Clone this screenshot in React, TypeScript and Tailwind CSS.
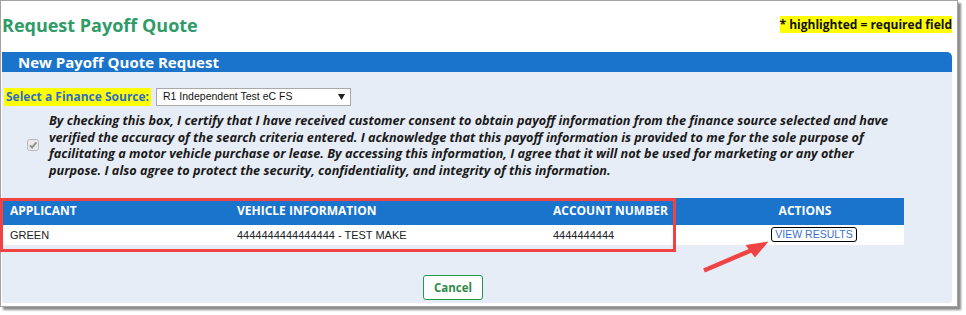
export default function App() {
  const os = { fontFamily: '"Open Sans", "Liberation Sans", Arial, sans-serif' };
  const ar = { fontFamily: '"Liberation Sans", Arial, sans-serif' };
  return (
    <div className="w-[966px] h-[315px] bg-white" style={os}>
      <div className="relative w-[958px] h-[307px] border border-[#a3a3a3] bg-white shadow-[3px_3px_2px_rgba(0,0,0,0.45)] pl-[1px] pr-[5px]">
        <div className="flex justify-between h-[51px]">
          <div className="mt-[11px] text-[18px] leading-[27px] font-bold text-[#2f9b67]">Request Payoff Quote</div>
          <div className="mt-[15px] h-[17px] leading-[17px] bg-[#ffff00] text-[12px] font-bold text-[#111]">* highlighted = required field</div>
        </div>
        <div className="h-[20px] bg-[#1b74cc] rounded-tr-[5px] pl-[16px] text-[15px] leading-[20px] font-bold text-white">New Payoff Quote Request</div>
        <div className="h-[231px] bg-[#e7edf6] rounded-b-[3px] pt-[16px]">
          <div className="flex items-center gap-[5px] pl-[2px]">
            <div className="h-[18px] leading-[18px] px-[2px] bg-[#ffff00] text-[12px] font-bold text-[#2d6ccb]">Select a Finance Source:</div>
            <div className="w-[195px] h-[18px] border border-[#a9a9a9] bg-white flex items-center justify-between pl-[6px] pr-[5px] text-[10.5px] text-[#111]" style={ar}>
              <span>R1 Independent Test eC FS</span>
              <svg width="7" height="6" viewBox="0 0 7 6"><polygon points="0,0 7,0 3.5,6" fill="#222" /></svg>
            </div>
          </div>
          <div className="flex items-center mt-[6px]">
            <div className="ml-[25px] w-[12px] h-[12px]">
              <svg width="12" height="12" viewBox="0 0 12 12">
                <rect x="0.5" y="0.5" width="11" height="11" rx="2" fill="#e9e9e9" stroke="#b9b9b9" />
                <path d="M3 6.3 L5.1 8.6 L9.3 3.4" fill="none" stroke="#8c8c8c" strokeWidth="1.8" />
              </svg>
            </div>
            <p className="ml-[10px] w-[860px] text-[12.7px] leading-[16.7px] font-bold italic text-[#1a1a1a]">
              By checking this box, I certify that I have received customer consent to obtain payoff information from the finance source selected and have<br />
              verified the accuracy of the search criteria entered. I acknowledge that this payoff information is provided to me for the sole purpose of<br />
              facilitating a motor vehicle purchase or lease. By accessing this information, I agree that it will not be used for marketing or any other<br />
              purpose. I also agree to protect the security, confidentiality, and integrity of this information.
            </p>
          </div>
          <div className="w-[902px] mt-[19px]">
            <div className="grid grid-cols-[227px_316px_161px_1fr] h-[27px] bg-[#1b74cc] text-white text-[12px] font-bold items-center">
              <div className="pl-[8px]">APPLICANT</div>
              <div className="pl-[8px]">VEHICLE INFORMATION</div>
              <div className="pl-[8px]">ACCOUNT NUMBER</div>
              <div className="text-center">ACTIONS</div>
            </div>
            <div className="grid grid-cols-[227px_316px_161px_1fr] h-[20px] bg-white text-[11px] text-[#222] items-center" style={ar}>
              <div className="pl-[8px]">GREEN</div>
              <div className="pl-[8px]">4444444444444444 - TEST MAKE</div>
              <div className="pl-[8px]">4444444444</div>
              <div className="pl-[65px] flex">
                <span className="h-[15px] w-[86px] border border-black rounded-[3px] text-[10.5px] leading-[13px] text-center text-[#3b6fcf]">VIEW RESULTS</span>
              </div>
            </div>
            <div className="flex justify-center mt-[30px]">
              <button className="w-[60px] h-[25px] bg-white border border-[#1d9a50] rounded-[3px] text-[11.5px] font-bold text-[#2f8a48]" style={os}>Cancel</button>
            </div>
          </div>
        </div>
        <div className="absolute left-[-1px] top-[197px] w-[676px] h-[54px] border-[3px] border-[#f04444] pointer-events-none" />
        <svg className="absolute left-[-1px] top-[-1px] pointer-events-none" width="966" height="315" viewBox="0 0 966 315">
          <line x1="704" y1="270.5" x2="752" y2="250" stroke="#f04444" strokeWidth="4.5" />
          <polygon points="768.5,241.5 745.5,245 755,257.5" fill="#f04444" />
        </svg>
      </div>
    </div>
  );
}
